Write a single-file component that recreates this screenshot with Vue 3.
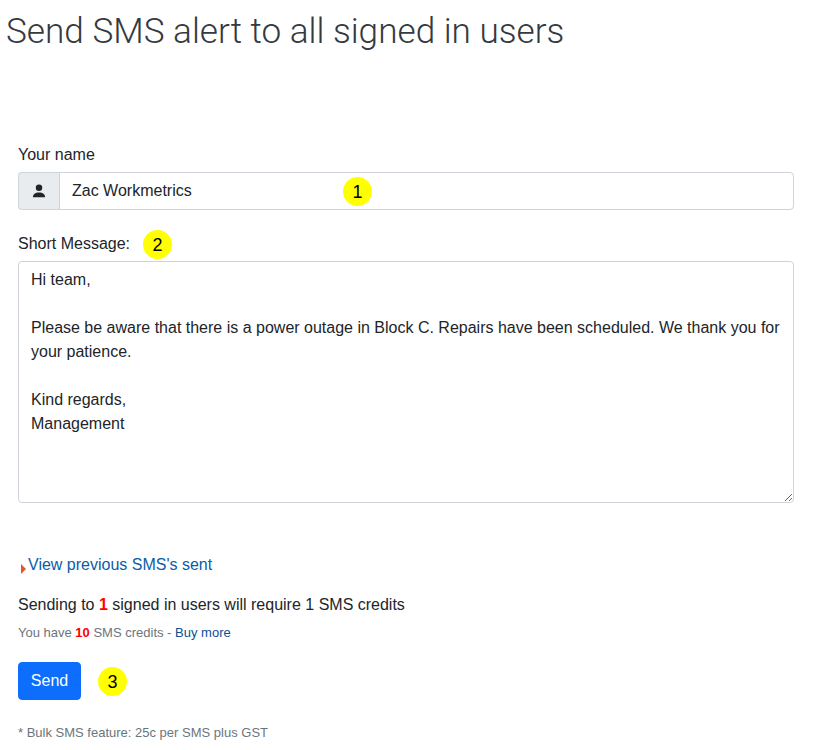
<script setup>
const message = `Hi team,

Please be aware that there is a power outage in Block C. Repairs have been scheduled. We thank you for your patience.

Kind regards,
Management`
</script>

<template>
  <div class="page">
    <h1 class="page-title">Send SMS alert to all signed in users</h1>

    <form class="sms-form" @submit.prevent>
      <label class="form-label" for="sender">Your name</label>
      <div class="input-group">
        <span class="input-group-text">
          <svg width="14" height="14" viewBox="0 0 16 16" aria-hidden="true">
            <circle cx="8" cy="4.4" r="3.7" fill="#212529" />
            <path d="M1 15.2c0-3.6 2.6-5.6 7-5.6s7 2 7 5.6z" fill="#212529" />
          </svg>
        </span>
        <input id="sender" class="form-control" type="text" value="Zac Workmetrics" />
        <span class="marker marker-name">1</span>
      </div>

      <div class="message-field">
        <label class="form-label" for="message">Short Message:</label>
        <span class="marker marker-message">2</span>
        <textarea id="message" class="form-control message-box" :value="message"></textarea>
      </div>

      <a class="history-link" href="#">
        <span class="caret"></span>View previous SMS's sent
      </a>

      <p class="summary">
        Sending to <strong class="count">1</strong> signed in users will require 1 SMS credits
      </p>
      <p class="credits">
        You have <strong class="count">10</strong> SMS credits - <a href="#">Buy more</a>
      </p>

      <div class="actions">
        <button class="btn-send" type="submit">Send</button>
        <span class="marker marker-send">3</span>
      </div>

      <p class="footnote">* Bulk SMS feature: 25c per SMS plus GST</p>
    </form>
  </div>
</template>

<style>
html,
body {
  margin: 0;
  background: #fff;
}
</style>

<style scoped>
.page {
  height: 750px;
  overflow: hidden;
  box-sizing: border-box;
  padding: 8px 21px 0 6px;
  font-family: "Liberation Sans", Arial, sans-serif;
  font-size: 16px;
  line-height: 24px;
  color: #212529;
}
.page-title {
  margin: 0;
  font-family: Roboto, sans-serif;
  font-weight: 300;
  font-size: 35.15px;
  line-height: 46px;
  color: #343a40;
}
.sms-form {
  margin: 89px 0 0 12px;
}
.form-label {
  display: block;
  margin-bottom: 5px;
}
.input-group {
  position: relative;
  display: flex;
  height: 38px;
  margin-bottom: 22px;
}
.input-group-text {
  display: flex;
  align-items: center;
  justify-content: center;
  box-sizing: border-box;
  width: 41px;
  background: #e9ecef;
  border: 1px solid #ced4da;
  border-right: 0;
  border-radius: 4px 0 0 4px;
}
.form-control {
  box-sizing: border-box;
  width: 100%;
  padding: 6px 12px;
  font: inherit;
  color: #212529;
  background: #fff;
  border: 1px solid #ced4da;
  border-radius: 4px;
  outline: none;
}
.input-group .form-control {
  flex: 1;
  border-radius: 0 4px 4px 0;
}
.message-field {
  position: relative;
  margin-bottom: 50px;
}
.message-box {
  display: block;
  height: 242px;
  resize: vertical;
}
.marker {
  position: absolute;
  display: flex;
  align-items: center;
  justify-content: center;
  width: 29px;
  height: 29px;
  border-radius: 50%;
  background: #ffff00;
  color: #000;
  font-size: 18px;
}
.marker-name {
  left: 325px;
  top: 5px;
}
.marker-message {
  left: 125px;
  top: -2px;
}
.marker-send {
  left: 80px;
  top: 5px;
}
.history-link {
  display: block;
  color: #0a5ca8;
  text-decoration: none;
}
.caret {
  display: inline-block;
  margin: 0 2px 0 3px;
  border-left: 5px solid #e4572e;
  border-top: 5px solid transparent;
  border-bottom: 5px solid transparent;
  vertical-align: -4px;
}
.summary {
  margin: 16px 0 0;
}
.count {
  color: #ff0000;
}
.credits {
  margin: 7px 0 0;
  font-size: 13px;
  line-height: 18px;
  color: #6c757d;
}
.credits a {
  color: #0a4f95;
  text-decoration: none;
}
.actions {
  position: relative;
  margin-top: 20px;
}
.btn-send {
  width: 63px;
  height: 38px;
  padding: 0;
  font: inherit;
  color: #fff;
  background: #0d6efd;
  border: 1px solid #0d6efd;
  border-radius: 4px;
}
.footnote {
  margin: 24px 0 0;
  font-size: 13px;
  line-height: 18px;
  color: #6c757d;
}
</style>
